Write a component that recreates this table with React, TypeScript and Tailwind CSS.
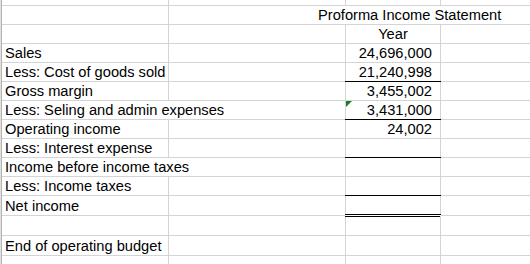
type Row = {
  label?: string
  value?: string
  h: string
  spill?: boolean
  rule?: 'single' | 'double'
  flag?: boolean
}

const rows: Row[] = [
  { label: 'Sales', value: '24,696,000', h: 'h-[19px]' },
  { label: 'Less: Cost of goods sold', value: '21,240,998', h: 'h-[19px]', rule: 'single' },
  { label: 'Gross margin', value: '3,455,002', h: 'h-[19px]' },
  { label: 'Less: Seling and admin expenses', value: '3,431,000', h: 'h-[19px]', spill: true, rule: 'single', flag: true },
  { label: 'Operating income', value: '24,002', h: 'h-[19px]' },
  { label: 'Less: Interest expense', h: 'h-[19px]', rule: 'single' },
  { label: 'Income before income taxes', h: 'h-[19px]', spill: true },
  { label: 'Less: Income taxes', h: 'h-[19px]', rule: 'single' },
  { label: 'Net income', h: 'h-[20px]', rule: 'double' },
  { h: 'h-[20px]' },
  { label: 'End of operating budget', h: 'h-[20px]' },
]

const cell = 'flex items-center border-b border-[#d4d4d4] pt-px leading-[17px] whitespace-nowrap'

function Sheet() {
  return (
    <div className="flex flex-col">
      {/* top partial row */}
      <div className="flex h-[6px]">
        <div className="w-[167px] border-r border-b border-[#d4d4d4]" />
        <div className="w-[177px] border-r border-b border-[#d4d4d4]" />
        <div className="w-[95px] border-r border-b border-[#d4d4d4]" />
        <div className="flex-1 border-b border-[#d4d4d4]" />
      </div>

      {/* title spills across B:D */}
      <div className="flex h-[19px]">
        <div className={`${cell} w-[167px] border-r`} />
        <div className={`${cell} flex-1 pl-[149px]`}>Proforma Income Statement</div>
      </div>

      <div className="flex h-[19px]">
        <div className={`${cell} w-[167px] border-r`} />
        <div className={`${cell} w-[177px] border-r`} />
        <div className={`${cell} w-[95px] border-r justify-center`}>Year</div>
        <div className={`${cell} flex-1`} />
      </div>

      {rows.map((r, i) => (
        <div key={i} className={`flex ${r.h}`}>
          <div className={`${cell} w-[167px] pl-[3px] overflow-visible ${r.spill ? 'border-r-0 relative z-10' : 'border-r'}`}>
            {r.label}
          </div>
          <div className={`${cell} w-[177px] border-r`} />
          <div className={`${cell} relative w-[95px] border-r justify-end pr-[8px]`}>
            {r.value}
            {r.flag && (
              <svg className="absolute left-0 top-0" width="6" height="6" viewBox="0 0 6 6">
                <polygon points="0,0 6,0 0,6" fill="#1e7d22" />
              </svg>
            )}
            {r.rule === 'single' && <div className="absolute -left-px -right-px -bottom-px h-px bg-black" />}
            {r.rule === 'double' && (
              <div className="absolute -left-px -right-px -bottom-[2px] h-[3px] border-y border-black bg-white" />
            )}
          </div>
          <div className={`${cell} flex-1`} />
        </div>
      ))}

      <div className="flex h-[9px]">
        <div className="w-[167px] border-r border-[#d4d4d4]" />
        <div className="w-[177px] border-r border-[#d4d4d4]" />
        <div className="w-[95px] border-r border-[#d4d4d4]" />
        <div className="flex-1" />
      </div>
    </div>
  )
}

export default function App() {
  return (
    <div className="flex h-[264px] w-[530px] overflow-hidden bg-white font-['Liberation_Sans',Arial,sans-serif] text-[14.67px] text-black">
      <div className="w-px bg-[#e0e0e0]" />
      <div className="w-px bg-[#b4b4b4]" />
      <div className="flex-1">
        <Sheet />
      </div>
    </div>
  )
}
